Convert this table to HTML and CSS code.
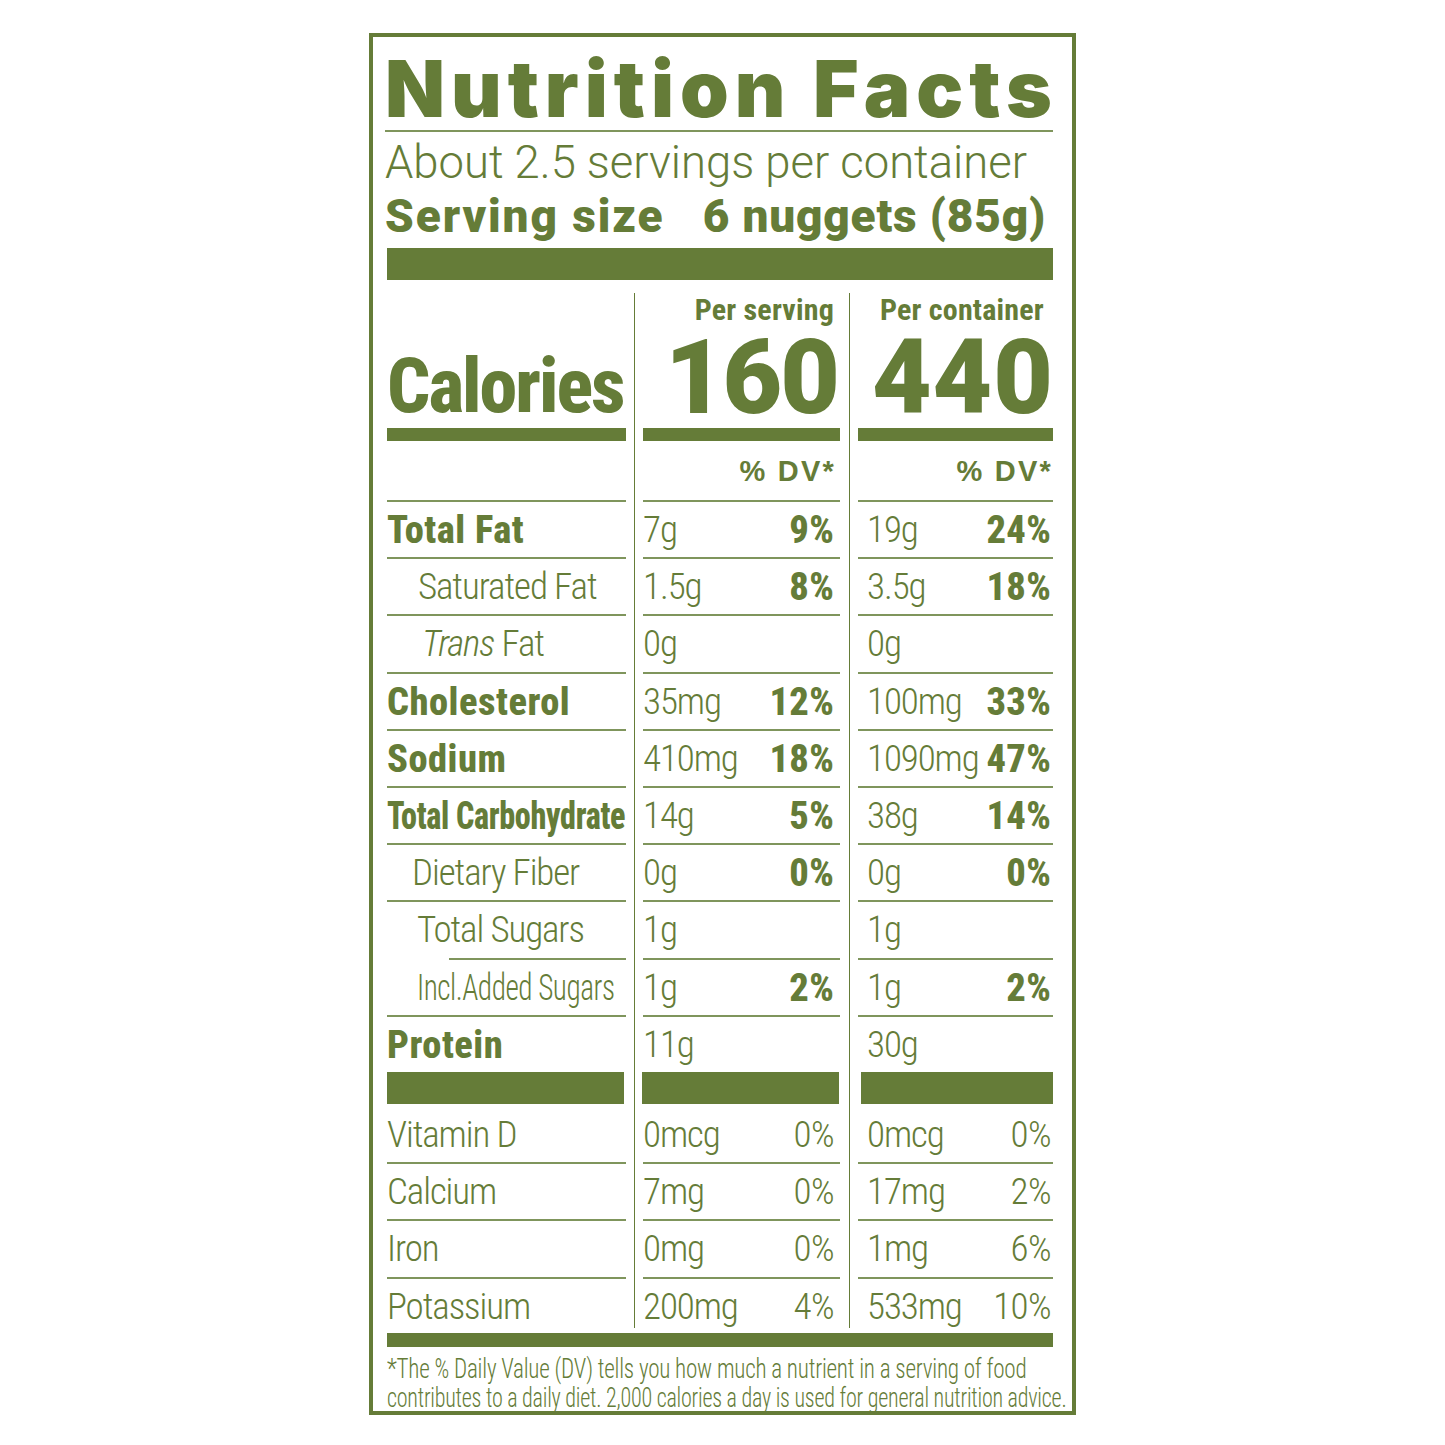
FILE: index.html
```html
<!DOCTYPE html>
<html lang="en">
<head>
<meta charset="utf-8">
<title>Nutrition Facts</title>
<link rel="stylesheet" href="styles.css">
</head>
<body>
<section class="label">
  <h1 class="title">Nutrition Facts</h1>
  <p class="servings">About 2.5 servings per container</p>
  <p class="serving-size"><span class="ss-label">Serving size</span><span>6 nuggets (85g)</span></p>
  <div class="bar-wide"></div>

  <div class="facts">
    <!-- header -->
    <div class="cell c1 r-hd"><div class="in"></div></div>
    <div class="cell c2 r-hd"><div class="in"><span class="per">Per serving</span></div></div>
    <div class="cell c3 r-hd"><div class="in"><span class="per">Per container</span></div></div>

    <!-- calories -->
    <div class="cell c1 r-cal"><div class="in"><span class="cal-label">Calories</span></div></div>
    <div class="cell c2 r-cal"><div class="in"><span class="cal-num">160</span></div></div>
    <div class="cell c3 r-cal"><div class="in"><span class="cal-num wide">440</span></div></div>

    <!-- % DV -->
    <div class="cell c1 r-dv"><div class="in"></div></div>
    <div class="cell c2 r-dv"><div class="in"><span class="dv">% DV*</span></div></div>
    <div class="cell c3 r-dv"><div class="in"><span class="dv">% DV*</span></div></div>

    <!-- Total Fat -->
    <div class="cell c1 r-n"><div class="in"><span class="lb b">Total Fat</span></div></div>
    <div class="cell c2 r-n"><div class="in"><span class="v">7g</span><span class="p">9%</span></div></div>
    <div class="cell c3 r-n"><div class="in"><span class="v">19g</span><span class="p">24%</span></div></div>

    <div class="cell c1 r-n"><div class="in"><span class="lb sat">Saturated Fat</span></div></div>
    <div class="cell c2 r-n"><div class="in"><span class="v">1.5g</span><span class="p">8%</span></div></div>
    <div class="cell c3 r-n"><div class="in"><span class="v">3.5g</span><span class="p">18%</span></div></div>

    <div class="cell c1 r-n"><div class="in"><span class="lb trans"><i>Trans</i> Fat</span></div></div>
    <div class="cell c2 r-n"><div class="in"><span class="v">0g</span></div></div>
    <div class="cell c3 r-n"><div class="in"><span class="v">0g</span></div></div>

    <div class="cell c1 r-n"><div class="in"><span class="lb b">Cholesterol</span></div></div>
    <div class="cell c2 r-n"><div class="in"><span class="v">35mg</span><span class="p">12%</span></div></div>
    <div class="cell c3 r-n"><div class="in"><span class="v">100mg</span><span class="p">33%</span></div></div>

    <div class="cell c1 r-n"><div class="in"><span class="lb b">Sodium</span></div></div>
    <div class="cell c2 r-n"><div class="in"><span class="v">410mg</span><span class="p">18%</span></div></div>
    <div class="cell c3 r-n"><div class="in"><span class="v">1090mg</span><span class="p">47%</span></div></div>

    <div class="cell c1 r-n"><div class="in"><span class="lb b carb">Total Carbohydrate</span></div></div>
    <div class="cell c2 r-n"><div class="in"><span class="v">14g</span><span class="p">5%</span></div></div>
    <div class="cell c3 r-n"><div class="in"><span class="v">38g</span><span class="p">14%</span></div></div>

    <div class="cell c1 r-n"><div class="in"><span class="lb fiber">Dietary Fiber</span></div></div>
    <div class="cell c2 r-n"><div class="in"><span class="v">0g</span><span class="p">0%</span></div></div>
    <div class="cell c3 r-n"><div class="in"><span class="v">0g</span><span class="p">0%</span></div></div>

    <div class="cell c1 r-n sugars"><div class="in"><span class="lb sug">Total Sugars</span></div></div>
    <div class="cell c2 r-n"><div class="in"><span class="v">1g</span></div></div>
    <div class="cell c3 r-n"><div class="in"><span class="v">1g</span></div></div>

    <div class="cell c1 r-n"><div class="in"><span class="lb added">Incl.Added Sugars</span></div></div>
    <div class="cell c2 r-n"><div class="in"><span class="v">1g</span><span class="p">2%</span></div></div>
    <div class="cell c3 r-n"><div class="in"><span class="v">1g</span><span class="p">2%</span></div></div>

    <div class="cell c1 r-prot"><div class="in"><span class="lb b">Protein</span></div></div>
    <div class="cell c2 r-prot"><div class="in"><span class="v">11g</span></div></div>
    <div class="cell c3 r-prot"><div class="in"><span class="v">30g</span></div></div>

    <div class="cell c1 r-bar"><div class="in"></div></div>
    <div class="cell c2 r-bar"><div class="in"></div></div>
    <div class="cell c3 r-bar"><div class="in"></div></div>

    <!-- vitamins -->
    <div class="cell c1 r-vit first"><div class="in"><span class="lb">Vitamin D</span></div></div>
    <div class="cell c2 r-vit first"><div class="in"><span class="v">0mcg</span><span class="p lt">0%</span></div></div>
    <div class="cell c3 r-vit first"><div class="in"><span class="v">0mcg</span><span class="p lt">0%</span></div></div>

    <div class="cell c1 r-vit"><div class="in"><span class="lb">Calcium</span></div></div>
    <div class="cell c2 r-vit"><div class="in"><span class="v">7mg</span><span class="p lt">0%</span></div></div>
    <div class="cell c3 r-vit"><div class="in"><span class="v">17mg</span><span class="p lt">2%</span></div></div>

    <div class="cell c1 r-vit"><div class="in"><span class="lb">Iron</span></div></div>
    <div class="cell c2 r-vit"><div class="in"><span class="v">0mg</span><span class="p lt">0%</span></div></div>
    <div class="cell c3 r-vit"><div class="in"><span class="v">1mg</span><span class="p lt">6%</span></div></div>

    <div class="cell c1 r-vit last"><div class="in"><span class="lb">Potassium</span></div></div>
    <div class="cell c2 r-vit last"><div class="in"><span class="v">200mg</span><span class="p lt">4%</span></div></div>
    <div class="cell c3 r-vit last"><div class="in"><span class="v">533mg</span><span class="p lt">10%</span></div></div>
  </div>

  <div class="bar-foot"></div>
  <p class="foot"><span class="foot-line l1">*The % Daily Value (DV) tells you how much a nutrient in a serving of food</span><span class="foot-line l2">contributes to a daily diet. 2,000 calories a day is used for general nutrition advice.</span></p>
</section>
</body>
</html>
```
FILE: styles.css
```css
:root {
  --g: #657c38;
  --line: #7f955c;
  --cond: "Roboto Condensed", Roboto, sans-serif;
}

html, body { margin: 0; padding: 0; background: #fff; }

body { color: var(--g); }

.label {
  box-sizing: border-box;
  width: 707px;
  height: 1382px;
  margin: 33px auto 0;
  border: 4px solid var(--g);
  padding: 0 19px 0 14px;
  overflow: hidden;
}

.title {
  margin: 0 0 0 -2px;
  padding-top: 10px;
  height: 83px;
  line-height: 83px;
  font-family: Inter, sans-serif;
  font-weight: 900;
  font-size: 78px;
  letter-spacing: 6px;
  white-space: nowrap;
  border-bottom: 2px solid var(--line);
}

.servings {
  margin: 0 0 0 -2px;
  padding-top: 7px;
  line-height: 48px;
  height: 48px;
  font-family: Roboto, sans-serif;
  font-weight: 300;
  font-size: 45.4px;
  white-space: nowrap;
}

.serving-size {
  margin: 5px 0 0 -2px;
  height: 48px;
  line-height: 48px;
  display: flex;
  justify-content: space-between;
  padding-right: 7px;
  font-family: Roboto, sans-serif;
  font-weight: 900;
  font-size: 46px;
  letter-spacing: 0.8px;
  white-space: nowrap;
}
.ss-label { letter-spacing: 1.9px; }

.bar-wide {
  margin-top: 8px;
  height: 32px;
  background: var(--g);
}

.facts {
  margin-top: 13px;
  display: grid;
  grid-template-columns: 247px 215px 204px;
}

.cell { box-sizing: border-box; }
.c1 { padding-right: 8px; }
.c2 { border-left: 1px solid var(--g); padding: 0 9px 0 8px; }
.c3 { border-left: 1px solid var(--g); padding-left: 8px; }

.in {
  box-sizing: border-box;
  display: flex;
  justify-content: space-between;
  white-space: nowrap;
  font-family: var(--cond);
}

.c3 .in { padding-left: 9px; padding-right: 2px; }
.c2 .in { padding-right: 6px; }

/* header */
.r-hd .in { height: 34px; line-height: 34px; justify-content: flex-end; }
.c3.r-hd .in { padding-right: 9px; }
.per { font-weight: 700; font-size: 30px; letter-spacing: 0.2px; }

/* calories */
.r-cal .in { height: 114px; border-bottom: 13px solid var(--g); }
.cal-label {
  font-weight: 800;
  font-size: 76px;
  line-height: 83px;
  padding-top: 18px;
  letter-spacing: -2px;
}
.c2.r-cal .in { justify-content: flex-end; padding-right: 2px; }
.c3.r-cal .in { justify-content: flex-end; padding-right: 1px; }
.cal-num {
  font-family: Roboto, sans-serif;
  font-weight: 900;
  font-size: 103px;
  line-height: 101px;
  letter-spacing: -2px;
}
.cal-num.wide { letter-spacing: 1px; margin-right: -2px; }

/* % DV */
.r-dv .in {
  height: 61px;
  border-bottom: 2px solid var(--line);
  justify-content: flex-end;
  padding-top: 2px;
}
.dv {
  font-family: "Liberation Sans", Arial, sans-serif;
  font-weight: 700;
  font-size: 29px;
  line-height: 57px;
  letter-spacing: 2.2px;
  margin-right: -2px;
}

/* nutrient rows */
.r-n .in {
  height: 57.2px;
  line-height: 55.2px;
  border-bottom: 2px solid var(--line);
}
.r-prot .in { height: 55.2px; line-height: 55.2px; }

.lb { font-size: 37px; font-weight: 300; letter-spacing: -1.1px; }
.lb.b { font-weight: 800; font-size: 38.5px; letter-spacing: 0.5px; }
.sat { margin-left: 31px; }
.trans { margin-left: 35px; }
.fiber { margin-left: 25px; }
.sug { margin-left: 30px; }

.lb.carb {
  letter-spacing: -0.4px;
  transform: scaleX(0.835);
  transform-origin: 0 50%;
}
.added {
  margin-left: 30px;
  letter-spacing: -0.6px;
  transform: scaleX(0.79);
  transform-origin: 0 50%;
}

.sugars .in {
  border-bottom: none;
  background: linear-gradient(var(--line), var(--line)) no-repeat right bottom / calc(100% - 62px) 2px;
}

.v { font-size: 37px; font-weight: 300; letter-spacing: -1.1px; }
.p { font-size: 38.5px; font-weight: 800; letter-spacing: 0.4px; margin-right: -0.4px; }
.p.lt { font-size: 37px; font-weight: 300; letter-spacing: -0.6px; margin-right: 0; }

/* protein bar */
.r-bar .in { height: 32px; background: var(--g); }
.c1.r-bar .in { margin-right: 2px; }
.c2.r-bar .in { margin-left: -1px; margin-right: 1px; }
.c3.r-bar .in { margin-left: 3px; }

/* vitamins */
.r-vit .in {
  height: 57.5px;
  line-height: 55.5px;
  border-bottom: 2px solid var(--line);
}
.r-vit.first .in { height: 60px; line-height: 58px; padding-top: 2px; }
.r-vit.last .in { height: 49px; border-bottom: none; }

.bar-foot {
  margin-top: 5px;
  height: 14px;
  background: var(--g);
}

.foot {
  margin: 0 -15px 0 0;
  padding-top: 7px;
  font-family: var(--cond);
  font-weight: 300;
  font-size: 28px;
  line-height: 29px;
  letter-spacing: -0.3px;
  white-space: nowrap;
}

.foot-line {
  display: block;
  width: max-content;
  transform-origin: 0 50%;
}
.foot-line.l1 { transform: scaleX(0.826); }
.foot-line.l2 { transform: scaleX(0.787); }
```
